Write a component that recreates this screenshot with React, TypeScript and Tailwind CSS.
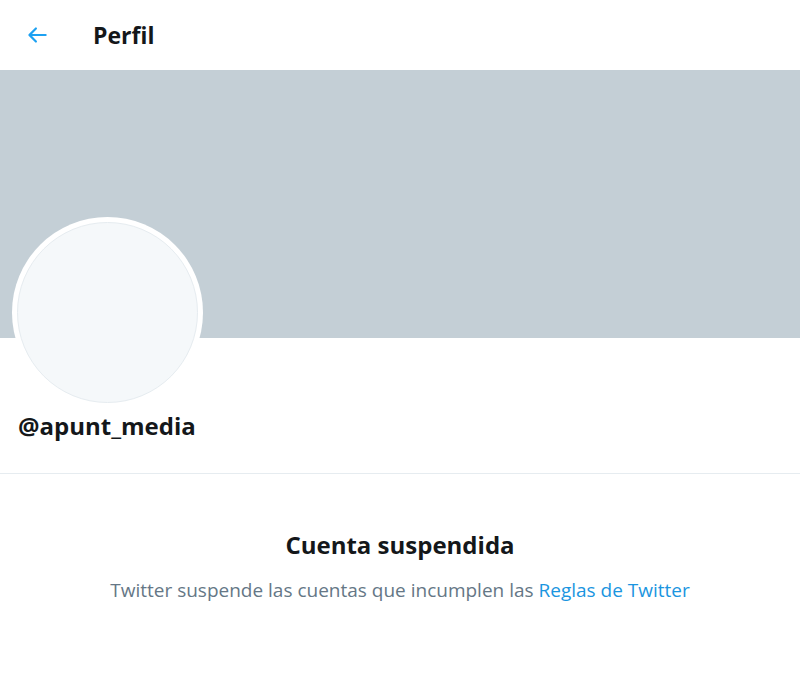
import React from 'react';

function BackArrow() {
  return (
    <svg viewBox="0 0 24 24" className="w-[26px] h-[26px]" fill="#1da1f2">
      <path d="M20 11H7.414l4.293-4.293a1 1 0 0 0-1.414-1.414l-6 6a1 1 0 0 0 0 1.414l6 6a.996.996 0 0 0 1.414 0 1 1 0 0 0 0-1.414L7.414 13H20a1 1 0 1 0 0-2z" />
    </svg>
  );
}

export default function App() {
  return (
    <div className="w-[800px] h-[687px] bg-white overflow-hidden" style={{ fontFamily: '"Open Sans", "Noto Sans", sans-serif' }}>
      <header className="h-[70px] flex items-center">
        <div className="w-[93px] pl-[24px] flex items-center">
          <BackArrow />
        </div>
        <h1 className="text-[23px] leading-[30px] font-bold text-[#14171a]">Perfil</h1>
      </header>
      <div className="h-[268px] bg-[#c4cfd6]" />
      <div className="-mt-[121px] ml-[12px] w-[191px] h-[191px] rounded-full bg-white p-[5px] relative">
        <div className="w-full h-full rounded-full bg-[#f5f8fa] border border-[#e6ecf0]" />
      </div>
      <div className="px-[18px] pt-[3px] pb-[32px] border-b border-[#e6ecf0]">
        <p className="text-[24px] leading-[30px] font-bold text-[#14171a]">@apunt_media</p>
      </div>
      <div className="flex flex-col items-center pt-[56px]">
        <h2 className="text-[24px] leading-[30px] font-bold text-[#14171a]">Cuenta suspendida</h2>
        <p className="mt-[18px] text-[19px] leading-[24px] text-[#657786]">
          Twitter suspende las cuentas que incumplen las <span className="text-[#1b95e0]">Reglas de Twitter</span>
        </p>
      </div>
    </div>
  );
}
